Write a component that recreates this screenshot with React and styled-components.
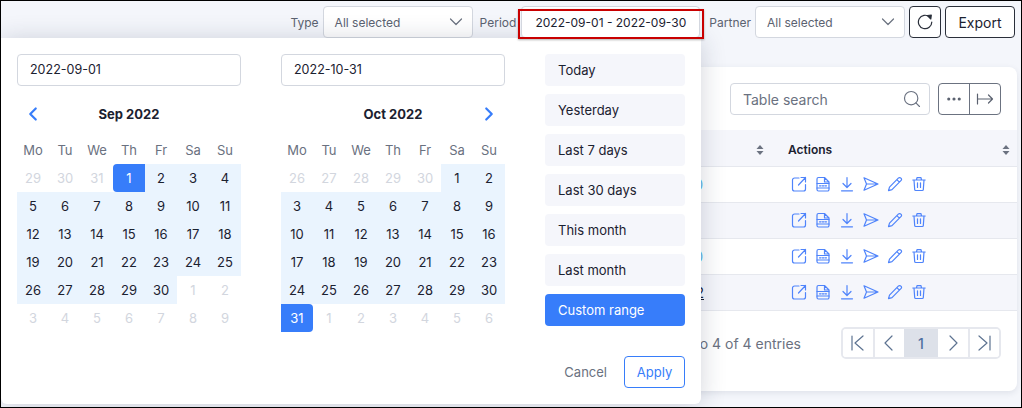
import React from "react";
import styled, { createGlobalStyle } from "styled-components";
import { ChevronLeft, ChevronRight, Search, MoreHorizontal } from "lucide-react";

const GlobalStyle = createGlobalStyle`
  html, body {
    margin: 0;
    padding: 0;
    background: #fff;
  }
  * {
    box-sizing: border-box;
  }
`;

const Frame = styled.div`
  position: relative;
  width: 1022px;
  height: 408px;
  overflow: hidden;
  border: 1px solid #000;
  background: #f4f6fb;
  font-family: Inter, "Noto Sans", sans-serif;
  font-size: 14px;
  color: #1b2130;
`;

const Toolbar = styled.div`
  display: flex;
  align-items: center;
  justify-content: flex-end;
  height: 32px;
  margin: 5px 6px 0 0;
`;

const Label = styled.span`
  font-size: 12px;
  color: #5b6270;
  margin: 0 ${(p) => p.$after || 4}px 0 ${(p) => p.$gap || 0}px;
`;

const Select = styled.div`
  display: flex;
  align-items: center;
  justify-content: space-between;
  width: 150px;
  height: 32px;
  padding: 0 9px 0 11px;
  background: #fff;
  border: 1px solid #d3d7df;
  border-radius: 4px;
  font-size: 12px;
  color: #5b6270;
`;

const PeriodBox = styled.div`
  position: relative;
  z-index: 3;
  display: flex;
  align-items: center;
  justify-content: center;
  width: 179px;
  height: 32px;
  background: #fff;
  border: 1px solid #d3d7df;
  border-radius: 4px;
  font-size: 12px;
  white-space: nowrap;
  &::after {
    content: "";
    position: absolute;
    left: -4px;
    right: -5px;
    top: 2px;
    bottom: -2px;
    border: 2px solid #c90000;
    box-shadow: 0 1px 2px rgba(0, 0, 0, 0.3);
  }
`;

const OutlineButton = styled.button`
  display: flex;
  align-items: center;
  justify-content: center;
  height: 32px;
  width: ${(p) => p.$width}px;
  margin-left: 4px;
  padding: 0;
  background: #fff;
  border: 1px solid #2a2f3a;
  border-radius: 4px;
  font-family: inherit;
  font-size: 14px;
  color: #1b2130;
`;

const Card = styled.div`
  margin: 29px 4px 0 16px;
  height: 324px;
  padding-top: 16px;
  background: #fff;
  border-radius: 8px;
  box-shadow: 0 2px 6px rgba(40, 50, 80, 0.1);
`;

const CardTools = styled.div`
  display: flex;
  justify-content: flex-end;
  gap: 8px;
  height: 32px;
  margin: 0 16px 15px 0;
`;

const SearchBox = styled.div`
  display: flex;
  align-items: center;
  justify-content: space-between;
  width: 200px;
  height: 32px;
  padding: 0 7px 0 12px;
  border: 1px solid #d3d7df;
  border-radius: 4px;
  color: #6a7180;
`;

const ButtonGroup = styled.div`
  display: flex;
  width: 63px;
  height: 32px;
  border: 1px solid #6b7280;
  border-radius: 4px;
`;

const GroupButton = styled.div`
  flex: 1;
  display: flex;
  align-items: center;
  justify-content: center;
  color: #5b6270;
  & + & {
    border-left: 1px solid #6b7280;
  }
`;

const Row = styled.div`
  display: grid;
  grid-template-columns: 1fr 241px;
  height: ${(p) => (p.$head ? 37 : 36)}px;
  align-items: center;
  background: ${(p) => (p.$stripe ? "#f5f6fb" : "#fff")};
  border-bottom: 1px solid #e6e8ee;
`;

const HeadCell = styled.div`
  display: flex;
  align-items: center;
  justify-content: ${(p) => (p.$end ? "flex-end" : "space-between")};
  padding: 3px 7px 0 12px;
  font-size: 12px;
  font-weight: 600;
`;

const SortSlot = styled.span`
  display: flex;
  margin-right: 5px;
`;

const NumberCell = styled.div`
  text-align: right;
  padding-right: ${(p) => (p.$dark ? 72 : 73)}px;
  font-size: 14px;
  color: ${(p) => (p.$dark ? "#1b2130" : "#55b4ea")};
  text-decoration: ${(p) => (p.$dark ? "underline" : "none")};
`;

const ActionCell = styled.div`
  display: flex;
  gap: 8px;
  padding: 0 0 2px 15px;
`;

const Icon = styled.svg`
  width: 16px;
  height: 16px;
  fill: none;
  stroke: ${(p) => p.$color || "#4f84fb"};
  stroke-width: ${(p) => p.$weight || 1.2};
  stroke-linecap: round;
  stroke-linejoin: round;
  flex-shrink: 0;
`;

const CardFooter = styled.div`
  display: flex;
  align-items: center;
  justify-content: flex-end;
  gap: 40px;
  margin: 16px 16px 0 0;
  color: #6a7180;
`;

const Pager = styled.div`
  display: flex;
  width: 160px;
  height: 32px;
  border: 2px solid #e6e8ee;
  border-radius: 5px;
  overflow: hidden;
`;

const PageItem = styled.div`
  flex: ${(p) => (p.$active ? "0 0 34px" : "1")};
  display: flex;
  align-items: center;
  justify-content: center;
  font-weight: 500;
  color: #4d6f9f;
  background: ${(p) => (p.$active ? "#dde1e9" : "#fff")};
  border-left: ${(p) => (p.$sep ? "2px solid #e6e8ee" : "none")};
`;

const Picker = styled.div`
  position: absolute;
  z-index: 2;
  left: 0;
  top: 37px;
  width: 700px;
  height: 366px;
  display: flex;
  gap: 40px;
  padding: 16px;
  background: #fff;
  border-radius: 0 0 6px 6px;
  box-shadow: 0 2px 26px rgba(30, 40, 70, 0.2);
`;

const Month = styled.div`
  width: 224px;
`;

const DateInput = styled.div`
  height: 32px;
  line-height: 30px;
  padding-left: 12px;
  border: 1px solid #d3d7df;
  border-radius: 4px;
  font-size: 12.5px;
`;

const MonthHead = styled.div`
  display: grid;
  grid-template-columns: 32px 1fr 32px;
  align-items: center;
  height: 28px;
  margin: 14px 0 8px;
  color: #377dfa;
`;

const NavSlot = styled.span`
  display: flex;
  justify-content: center;
`;

const MonthName = styled.div`
  text-align: center;
  font-size: 13px;
  font-weight: 700;
  color: #1b2130;
`;

const Days = styled.div`
  display: grid;
  grid-template-columns: repeat(7, 32px);
  grid-auto-rows: 28px;
`;

const Weekday = styled.div`
  display: flex;
  align-items: center;
  justify-content: center;
  color: #6a7180;
  font-size: 13px;
`;

const Day = styled.div`
  display: flex;
  align-items: center;
  justify-content: center;
  font-size: 13px;
  color: ${(p) =>
    p.$kind === "off" ? "#d2d6de" : p.$kind === "start" || p.$kind === "end" ? "#fff" : "#1b2130"};
  background: ${(p) =>
    p.$kind === "range" ? "#eaf4fe" : p.$kind === "start" || p.$kind === "end" ? "#377dfa" : "transparent"};
  border-radius: ${(p) =>
    p.$kind === "start" ? "4px 0 0 4px" : p.$kind === "end" ? "0 4px 4px 0" : "0"};
`;

const Side = styled.div`
  display: flex;
  flex-direction: column;
  width: 140px;
`;

const Presets = styled.div`
  display: flex;
  flex-direction: column;
  gap: 8px;
`;

const Preset = styled.div`
  height: 32px;
  line-height: 32px;
  padding-left: 13px;
  border-radius: 4px;
  font-size: 13px;
  background: ${(p) => (p.$active ? "#377dfa" : "#f5f6fb")};
  color: ${(p) => (p.$active ? "#fff" : "#1b2130")};
`;

const SideFooter = styled.div`
  display: flex;
  align-items: center;
  justify-content: flex-end;
  gap: 17px;
  margin-top: auto;
`;

const Cancel = styled.span`
  font-size: 13px;
  color: #6a7180;
`;

const Apply = styled.div`
  width: 61px;
  height: 32px;
  line-height: 30px;
  text-align: center;
  font-size: 13px;
  color: #377dfa;
  border: 1px solid #377dfa;
  border-radius: 4px;
`;

const Chevron = () => (
  <Icon viewBox="0 0 14 8" style={{ width: 14, height: 8 }} $color="#6b7280">
    <path d="M1.5 1 7 6.5 12.5 1" />
  </Icon>
);

const Sort = () => (
  <svg width="8" height="12" viewBox="0 0 8 12" fill="#6b7280">
    <path d="M4 1 7.5 5h-7zM4 11 .5 7h7z" />
  </svg>
);

const ActionIcons = () => (
  <ActionCell>
    <Icon viewBox="0 0 16 16">
      <path d="M8 2H3.500a2 2 0 0 0-2 2v9a2 2 0 0 0 2 2h9a2 2 0 0 0 2-2V8.500" />
      <path d="M7.500 9 14.500 1.500M10 1.500h4.500V6" />
    </Icon>
    <Icon viewBox="0 0 16 16">
      <path d="M2 13.500V3a1.500 1.500 0 0 1 1.500-1.500h6L14 6v7.500a1.500 1.500 0 0 1-1.500 1.500h-9A1.500 1.500 0 0 1 2 13.500ZM9.500 1.500V6H14" />
      <path d="M2 7.500h12M2 12h12M4.500 9.800h1.500M7.300 9.800h1.500M10 9.800h1.500" />
    </Icon>
    <Icon viewBox="0 0 16 16">
      <path d="M8 1.500V11.500M4 7.500 8 11.500 12 7.500M2.500 14.800h11" />
    </Icon>
    <Icon viewBox="0 0 16 16">
      <path d="M1 1.800 15 8 1 14.200 3.500 8ZM3.500 8H15" />
    </Icon>
    <Icon viewBox="0 0 16 16">
      <path d="M11.300 2.100a1.800 1.800 0 0 1 2.600 2.600L5 13.600l-3.500 1 1-3.500ZM9.800 3.600l2.600 2.600" />
    </Icon>
    <Icon viewBox="0 0 16 16">
      <path d="M1.800 4h12.400M5.500 4l.5-2.300h4L10.500 4M3 4l.7 9.600a1 1 0 0 0 1 .9h6.600a1 1 0 0 0 1-.9L13 4M6.500 6.800v4.700M9.500 6.800v4.700" />
    </Icon>
  </ActionCell>
);

const weekdays = ["Mo", "Tu", "We", "Th", "Fr", "Sa", "Su"];

// prev / current / next month numbers, kind comes from the selected range
const sepDays = [
  ...[29, 30, 31].map((d) => [d, "off"]),
  [1, "start"],
  ...Array.from({ length: 29 }, (_, i) => [i + 2, "range"]),
  ...[1, 2, 3, 4, 5, 6, 7, 8, 9].map((d) => [d, "off"]),
];

const octDays = [
  ...[26, 27, 28, 29, 30].map((d) => [d, "off"]),
  ...Array.from({ length: 30 }, (_, i) => [i + 1, "range"]),
  [31, "end"],
  ...[1, 2, 3, 4, 5, 6].map((d) => [d, "off"]),
];

const presets = ["Today", "Yesterday", "Last 7 days", "Last 30 days", "This month", "Last month"];

const rows = [
  { id: "0", stripe: false },
  { id: "", stripe: true },
  { id: "0", stripe: false },
  { id: "2", stripe: true, dark: true },
];

const Calendar = ({ date, title, days, prev, next }) => (
  <Month>
    <DateInput>{date}</DateInput>
    <MonthHead>
      <NavSlot>{prev && <ChevronLeft size={22} strokeWidth={2.4} />}</NavSlot>
      <MonthName>{title}</MonthName>
      <NavSlot>{next && <ChevronRight size={22} strokeWidth={2.4} />}</NavSlot>
    </MonthHead>
    <Days>
      {weekdays.map((w) => (
        <Weekday key={w}>{w}</Weekday>
      ))}
      {days.map(([d, kind], i) => (
        <Day key={i} $kind={kind}>
          {d}
        </Day>
      ))}
    </Days>
  </Month>
);

const App = () => {
  return (
    <Frame>
      <GlobalStyle />
      <Toolbar>
        <Label>Type</Label>
        <Select>
          All selected
          <Chevron />
        </Select>
        <Label $gap={7} $after={5}>
          Period
        </Label>
        <PeriodBox>2022-09-01 - 2022-09-30</PeriodBox>
        <Label $gap={9}>Partner</Label>
        <Select>
          All selected
          <Chevron />
        </Select>
        <OutlineButton $width={32}>
          <Icon viewBox="0 0 16 16" $color="#2a2f3a">
            <path d="M12.600 3A6.700 6.700 0 1 0 14.800 8" />
            <path d="M10.500 1.500 14.300 1 13.800 5Z" fill="#2a2f3a" />
          </Icon>
        </OutlineButton>
        <OutlineButton $width={70}>Export</OutlineButton>
      </Toolbar>

      <Card>
        <CardTools>
          <SearchBox>
            Table search
            <Search size={20} strokeWidth={1.4} />
          </SearchBox>
          <ButtonGroup>
            <GroupButton>
              <MoreHorizontal size={18} strokeWidth={2.2} />
            </GroupButton>
            <GroupButton>
              <Icon viewBox="0 0 18 12" style={{ width: 18, height: 12 }} $color="#5b6270">
                <path d="M1.500 1v10M1.500 6H16.500M12.500 2 16.500 6 12.500 10" />
              </Icon>
            </GroupButton>
          </ButtonGroup>
        </CardTools>
        <Row $head $stripe>
          <HeadCell $end>
            <SortSlot>
              <Sort />
            </SortSlot>
          </HeadCell>
          <HeadCell>
            Actions
            <Sort />
          </HeadCell>
        </Row>
        {rows.map((r, i) => (
          <Row key={i} $stripe={r.stripe}>
            <NumberCell $dark={r.dark}>{r.id}</NumberCell>
            <ActionIcons />
          </Row>
        ))}
        <CardFooter>
          <span>Showing 1 to 4 of 4 entries</span>
          <Pager>
            <PageItem>
              <Icon viewBox="0 0 16 16" $color="#5d7391">
                <path d="M2 1v14M13 1 5 8l8 7" />
              </Icon>
            </PageItem>
            <PageItem $sep>
              <Icon viewBox="0 0 16 16" $color="#5d7391">
                <path d="M11 1 4 8l7 7" />
              </Icon>
            </PageItem>
            <PageItem $active>1</PageItem>
            <PageItem>
              <Icon viewBox="0 0 16 16" $color="#5d7391">
                <path d="M5 1l7 7-7 7" />
              </Icon>
            </PageItem>
            <PageItem $sep>
              <Icon viewBox="0 0 16 16" $color="#5d7391">
                <path d="M14 1v14M3 1l8 7-8 7" />
              </Icon>
            </PageItem>
          </Pager>
        </CardFooter>
      </Card>

      <Picker>
        <Calendar date="2022-09-01" title="Sep 2022" days={sepDays} prev />
        <Calendar date="2022-10-31" title="Oct 2022" days={octDays} next />
        <Side>
          <Presets>
            {presets.map((p) => (
              <Preset key={p}>{p}</Preset>
            ))}
            <Preset $active>Custom range</Preset>
          </Presets>
          <SideFooter>
            <Cancel>Cancel</Cancel>
            <Apply>Apply</Apply>
          </SideFooter>
        </Side>
      </Picker>
    </Frame>
  );
};

export default App;
